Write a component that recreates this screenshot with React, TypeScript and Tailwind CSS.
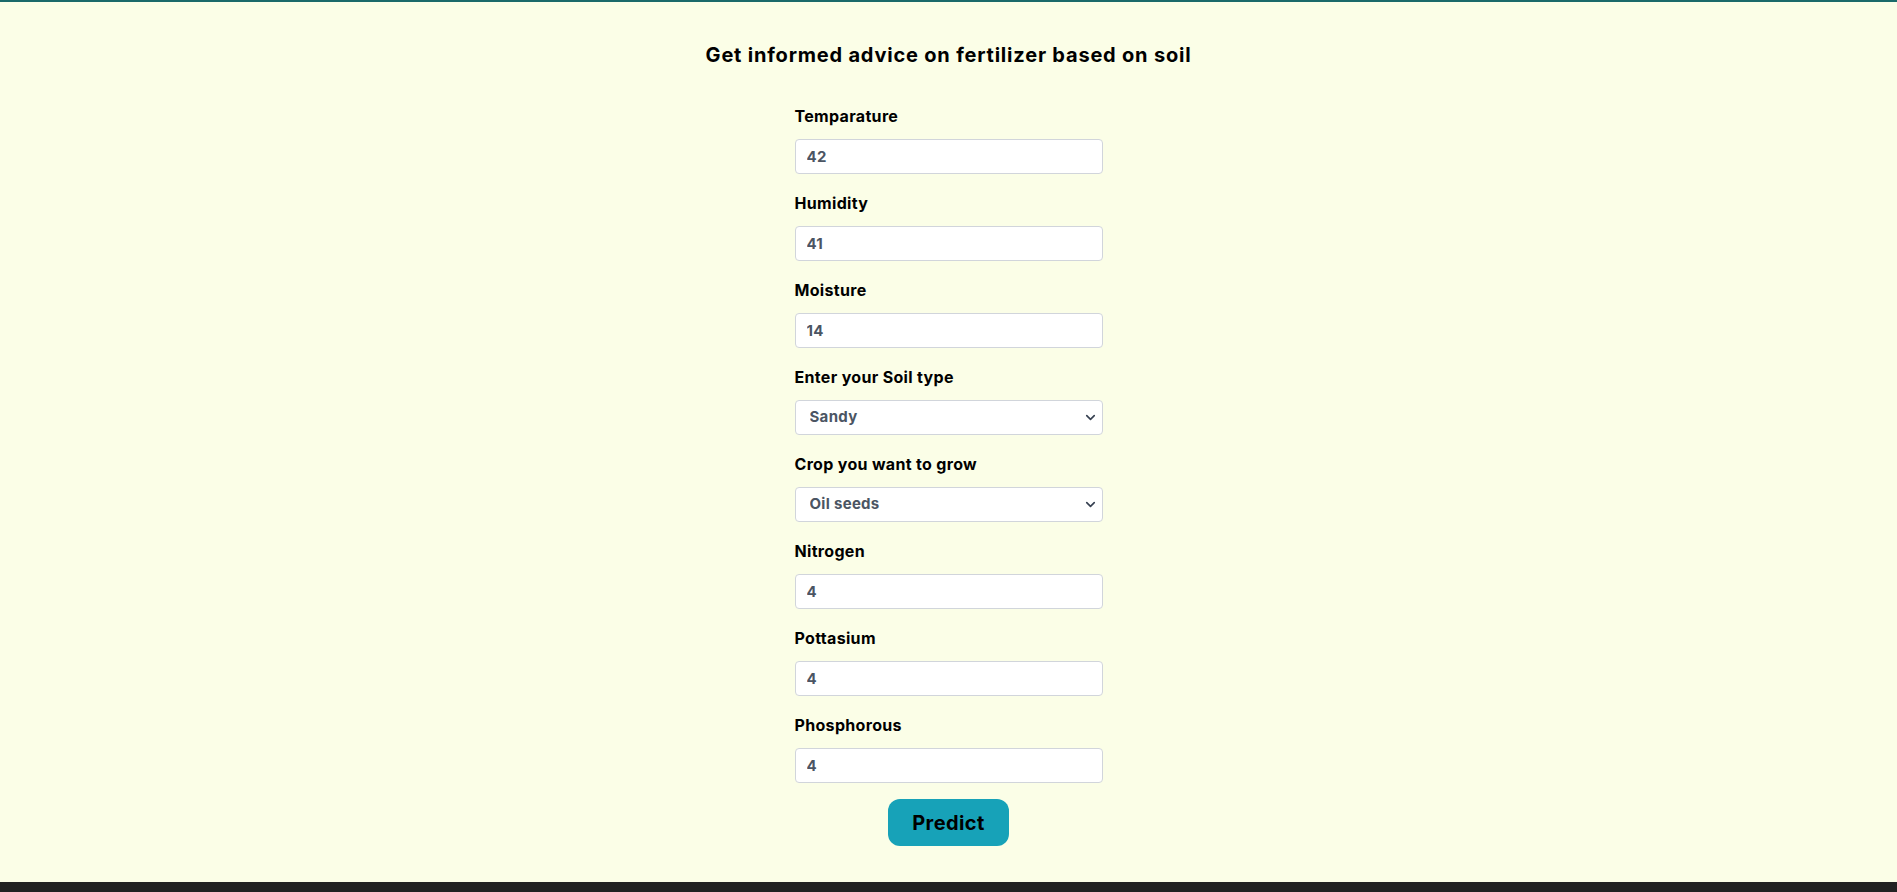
import { ChevronDown } from "lucide-react";

const font = { fontFamily: "Inter, 'Noto Sans', sans-serif" };

const fields = [
  { label: "Temparature", value: "42" },
  { label: "Humidity", value: "41" },
  { label: "Moisture", value: "14" },
  { label: "Enter your Soil type", value: "Sandy", options: ["Sandy", "Loamy", "Black", "Red", "Clayey"] },
  { label: "Crop you want to grow", value: "Oil seeds", options: ["Maize", "Sugarcane", "Cotton", "Tobacco", "Paddy", "Barley", "Wheat", "Millets", "Oil seeds", "Pulses", "Ground Nuts"] },
  { label: "Nitrogen", value: "4" },
  { label: "Pottasium", value: "4" },
  { label: "Phosphorous", value: "4" },
];

const Field = ({ label, value, options }: { label: string; value: string; options?: string[] }) => (
  <div className="flex flex-col mb-[17px]">
    <label className="text-base leading-6 font-bold tracking-[0.02em] text-black mb-[11px]">{label}</label>
    {options ? (
      <div className="relative">
        <select
          defaultValue={value}
          className="appearance-none w-full h-[35px] bg-white border border-[#d1d5db] rounded-[4px] pl-[14px] pr-8 text-[15px] font-bold tracking-[0.02em] text-[#4b5563] outline-none"
          style={font}
        >
          {options.map((o) => (
            <option key={o}>{o}</option>
          ))}
        </select>
        <ChevronDown className="absolute right-[5px] top-[10px] w-[15px] h-[15px] text-[#374151] pointer-events-none" strokeWidth={2.6} />
      </div>
    ) : (
      <input
        type="number"
        defaultValue={value}
        className="w-full h-[35px] bg-white border border-[#d1d5db] rounded-[4px] px-[11px] text-[15px] font-bold tracking-[0.02em] text-[#4b5563] outline-none"
        style={font}
      />
    )}
  </div>
);

export default function App() {
  return (
    <div className="min-h-screen flex flex-col bg-[#fbfee7] border-t-2 border-[#1a6a6a]" style={font}>
      <main className="flex flex-col items-center pt-[39px] pb-[36px]">
        <h1 className="text-xl leading-7 font-bold tracking-[0.04em] text-black mb-[35px]">
          Get informed advice on fertilizer based on soil
        </h1>
        <form className="w-[308px] flex flex-col" onSubmit={(e) => e.preventDefault()}>
          {fields.map((f) => (
            <Field key={f.label} {...f} />
          ))}
          <button
            type="submit"
            className="self-center -mt-px w-[121px] h-[47px] rounded-xl bg-[#17a2b8] text-black text-xl font-bold tracking-[0.02em]"
          >
            Predict
          </button>
        </form>
      </main>
      <footer className="bg-[#222222] h-[120px]" />
    </div>
  );
}
